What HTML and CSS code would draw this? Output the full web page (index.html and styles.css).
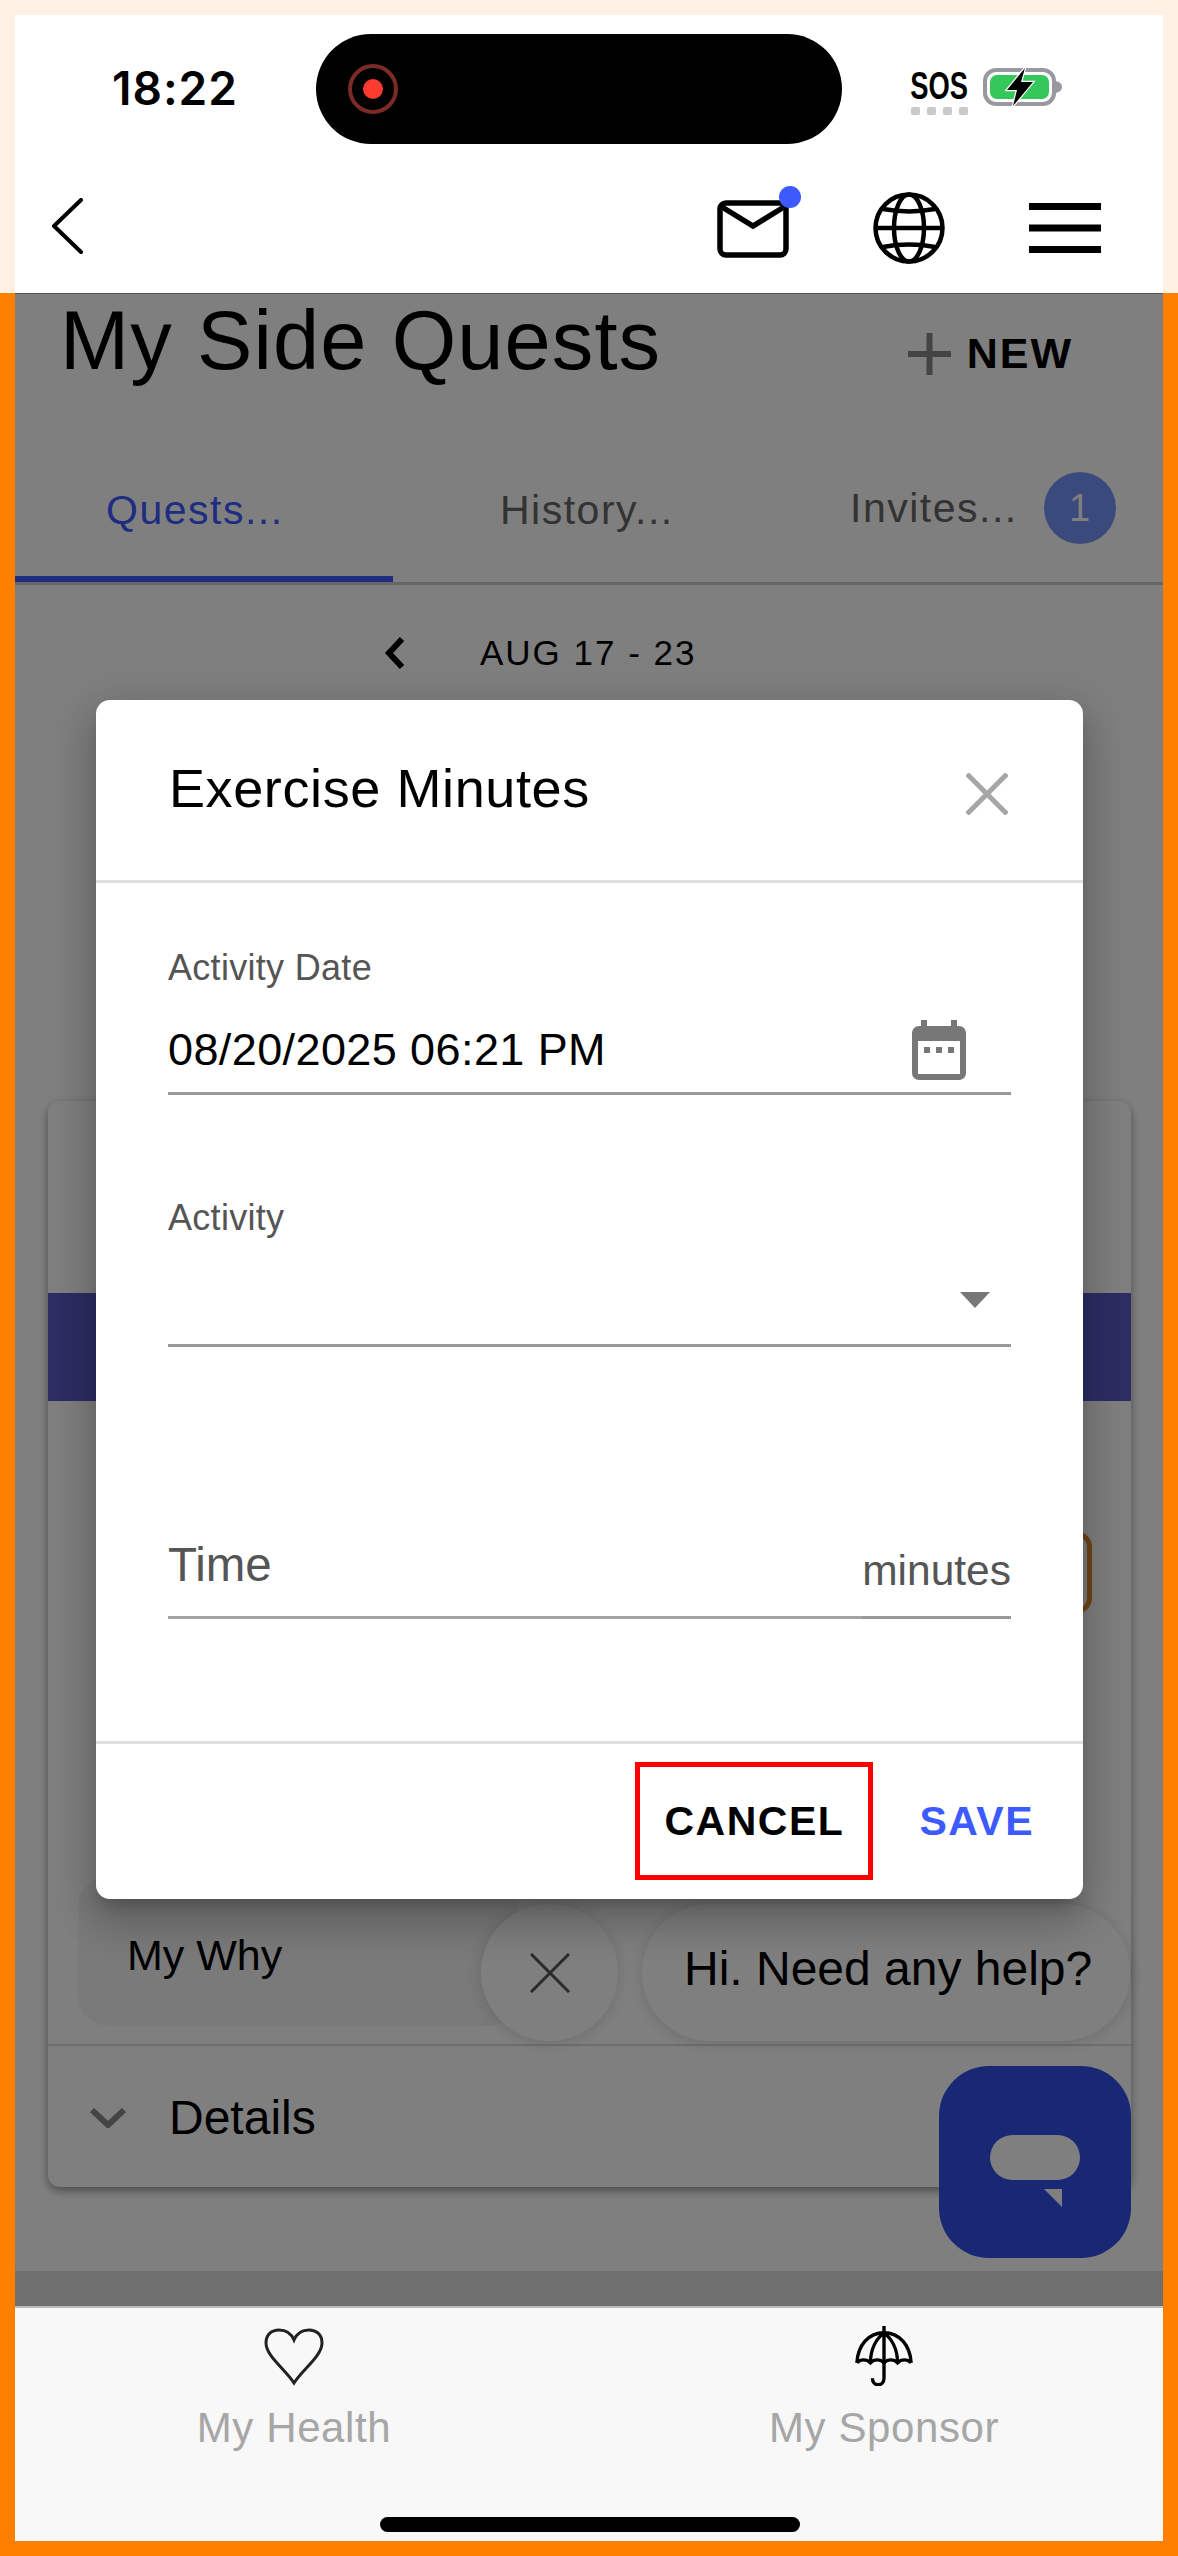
FILE: index.html
```html
<!DOCTYPE html>
<html lang="en">
<head>
    <meta charset="UTF-8"/>
    <meta name="viewport" content="width=device-width, initial-scale=1.0"/>
    <title>My Side Quests</title>
    <link rel="stylesheet" href="styles.css">
</head>

<body>
<div class="phone">
    <div class="top">
        <div class="bar">
            <!-- status bar -->
            <div class="status">
                <span class="clock">18:22</span>
                <div class="island">
                    <span class="rec"><span class="rec-dot"></span></span>
                </div>
                <div class="sos">
                    <span class="sos-text">SOS</span>
                    <span class="sos-dots"><i></i><i></i><i></i><i></i></span>
                </div>
                <svg class="battery" width="80" height="42" viewBox="0 0 80 42">
                    <rect x="2" y="4" width="69" height="34" rx="11" fill="none" stroke="#98989e" stroke-width="4"/>
                    <path d="M73 15c4 1 6 3 6 6s-2 5-6 6z" fill="#98989e"/>
                    <rect x="7" y="9" width="59" height="24" rx="7" fill="#34c759"/>
                    <path d="M42 2L24 24h10l-4 16 20-24H38z" fill="#000" stroke="#fff" stroke-width="2.5" paint-order="stroke"/>
                </svg>
            </div>
            <!-- nav -->
            <div class="nav">
                <svg class="back" width="32" height="56" viewBox="0 0 32 56">
                    <path d="M30 2L3 28l27 26" fill="none" stroke="#000" stroke-width="4" stroke-linecap="round" stroke-linejoin="round"/>
                </svg>
                <div class="nav-icons">
                    <div class="mail">
                        <svg width="72" height="58" viewBox="0 0 72 58">
                            <rect x="3" y="3" width="66" height="52" rx="6" fill="none" stroke="#000" stroke-width="5.5"/>
                            <path d="M5 7l31 19L67 7" fill="none" stroke="#000" stroke-width="5.5"/>
                        </svg>
                        <span class="mail-dot"></span>
                    </div>
                    <svg width="72" height="72" viewBox="0 0 72 72" fill="none" stroke="#000" stroke-width="4.5">
                        <circle cx="36" cy="36" r="33.5"/>
                        <ellipse cx="36" cy="36" rx="15" ry="33.5"/>
                        <path d="M3 36h66"/>
                        <path d="M10 17c16 3 36 3 52 0"/>
                        <path d="M10 55c16-3 36-3 52 0"/>
                    </svg>
                    <svg width="72" height="50" viewBox="0 0 72 50">
                        <rect y="0" width="72" height="7"/>
                        <rect y="21.500" width="72" height="7"/>
                        <rect y="43" width="72" height="7"/>
                    </svg>
                </div>
            </div>
        </div>
    </div>

    <div class="main">
        <div class="title-row">
            <h1 class="title">My Side Quests</h1>
            <div class="new">
                <svg width="43" height="42" viewBox="0 0 43 42">
                    <path d="M21.500 0v42M0 21h43" stroke="#888" stroke-width="6"/>
                </svg>
                <span>NEW</span>
            </div>
        </div>

        <div class="tabs">
            <div class="tab tab-active">Quests...</div>
            <div class="tab tab-history">History...</div>
            <div class="tab tab-invites">Invites...<span class="count">1</span></div>
        </div>

        <div class="week">
            <svg width="22" height="34" viewBox="0 0 22 34">
                <path d="M18 3L5 17l13 14" fill="none" stroke="#000" stroke-width="6"/>
            </svg>
            <span>AUG 17 - 23</span>
        </div>

        <div class="card">
            <div class="card-band"></div>
            <div class="card-mark"></div>
            <div class="card-body">
                <div class="why">My Why</div>
            </div>
            <div class="details">
                <svg width="36" height="20" viewBox="0 0 36 20">
                    <path d="M2 2l16 15L34 2" fill="none" stroke="#888" stroke-width="6"/>
                </svg>
                <span>Details</span>
            </div>
        </div>
        <div class="foot-strip"></div>

        <!-- chat widget -->
        <div class="chat-help">
            <div class="chat-close">
                <svg width="40" height="40" viewBox="0 0 40 40">
                    <path d="M1 1l38 38M39 1L1 39" stroke="#555" stroke-width="3"/>
                </svg>
            </div>
            <div class="chat-bubble">Hi. Need any help?</div>
        </div>
        <div class="chat-fab">
            <svg width="90" height="72" viewBox="0 0 90 72">
                <rect width="90" height="45" rx="22.500" fill="#fff"/>
                <path d="M54 54h18v18z" fill="#fff"/>
            </svg>
        </div>

        <div class="dim"></div>

        <!-- dialog -->
        <div class="modal">
            <div class="modal-head">
                <h2>Exercise Minutes</h2>
                <svg width="42" height="42" viewBox="0 0 42 42">
                    <path d="M1 1l40 40M41 1L1 41" stroke="#a6a6a6" stroke-width="5"/>
                </svg>
            </div>
            <div class="modal-body">
                <div class="label label-date">Activity Date</div>
                <div class="row row-date">
                    <span class="value">08/20/2025 06:21 PM</span>
                    <svg class="cal" width="54" height="60" viewBox="0 0 54 60">
                        <path d="M9 0h6v6h24V0h6v6h2a7 7 0 0 1 7 7v40a7 7 0 0 1-7 7H7a7 7 0 0 1-7-7V13a7 7 0 0 1 7-7h2z" fill="#777"/>
                        <rect x="6" y="21" width="42" height="33" fill="#fff"/>
                        <path d="M12 27h6v6h-6zM24 27h6v6h-6zM36 27h6v6h-6z" fill="#777"/>
                    </svg>
                </div>
                <div class="label label-activity">Activity</div>
                <div class="row row-select">
                    <svg class="caret" width="30" height="16" viewBox="0 0 30 16">
                        <path d="M0 0h30L15 16z" fill="#777"/>
                    </svg>
                </div>
                <div class="row-time">
                    <div class="time-input">Time</div>
                    <div class="time-unit">minutes</div>
                </div>
            </div>
            <div class="modal-foot">
                <button class="btn btn-cancel">CANCEL</button>
                <button class="btn btn-save">SAVE</button>
            </div>
        </div>
    </div>

    <div class="tabbar">
        <div class="tabbar-items">
            <div class="tabbar-item">
                <svg width="60" height="60" viewBox="0 0 60 60">
                    <path d="M30 57C21 43 2 30 2 17 2 8 8 4 15 4c6 0 12 3 15 10 3-7 9-10 15-10 7 0 13 4 13 13 0 13-19 26-28 40z" fill="none" stroke="#222" stroke-width="3"/>
                </svg>
                <span>My Health</span>
            </div>
            <div class="tabbar-item">
                <svg width="60" height="60" viewBox="0 0 60 62" fill="none" stroke="#000" stroke-width="3.5">
                    <path d="M30 0v8"/>
                    <path d="M2 38C3 20 14 7 30 7s27 13 28 31"/>
                    <path d="M2 38c4-4 10-4 14 0 4-4 10-4 14 0 4-4 10-4 14 0 4-4 10-4 14 0"/>
                    <path d="M16 38c0-14 6-25 14-31 8 6 14 17 14 31M30 7v31"/>
                    <path d="M30 38v16c0 9-12 9-12 0"/>
                </svg>
                <span>My Sponsor</span>
            </div>
        </div>
        <div class="home-bar"></div>
    </div>
</div>
</body>
</html>
```

FILE: styles.css
```css
* {
    box-sizing: border-box;
}

body {
    margin: 0;
    font-family: "Liberation Sans", Arial, sans-serif;
    color: #000;
}

.phone {
    width: 1178px;
    height: 2556px;
    background: #ff7f00;
    display: flex;
    flex-direction: column;
    padding-bottom: 15px;
    overflow: hidden;
}

/* top: status + nav */
.top {
    background: #fef0e3;
    padding: 15px 15px 0;
    height: 293px;
    flex: none;
}

.bar {
    background: #fff;
    height: 100%;
}

.status {
    height: 148px;
    display: flex;
    align-items: center;
    position: relative;
}

.clock {
    font-family: Inter, "Liberation Sans", sans-serif;
    font-weight: 600;
    font-size: 46px;
    letter-spacing: 1px;
    width: 301px;
    padding-left: 97px;
    margin-top: -2px;
}

.island {
    width: 526px;
    height: 110px;
    border-radius: 55px;
    background: #000;
    display: flex;
    align-items: center;
    padding-left: 32px;
}

.rec {
    width: 50px;
    height: 50px;
    border-radius: 50%;
    border: 4px solid #7a2b25;
    display: flex;
    align-items: center;
    justify-content: center;
}

.rec-dot {
    width: 20px;
    height: 20px;
    border-radius: 50%;
    background: #ff3b30;
}

.sos {
    margin-left: 68px;
    width: 58px;
    display: flex;
    flex-direction: column;
    align-items: center;
    gap: 4px;
    margin-top: 6px;
}

.sos-text {
    display: inline-block;
    font-weight: 700;
    font-size: 38px;
    line-height: 34px;
    transform: scaleX(.72);
    white-space: nowrap;
}

.sos-dots {
    display: flex;
    gap: 7px;
}

.sos-dots i {
    width: 9px;
    height: 8px;
    border-radius: 2px;
    background: #c9c9c9;
}

.battery {
    margin: -4px 0 0 15px;
}

.nav {
    height: 130px;
    display: flex;
    align-items: center;
    padding: 0 62px 0 36px;
}

.back {
    margin-top: -4px;
}

.nav-icons {
    margin-left: auto;
    display: flex;
    align-items: center;
    gap: 84px;
}

.mail {
    position: relative;
    height: 58px;
    margin-top: 2px;
}

.mail-dot {
    position: absolute;
    left: 62px;
    top: -14px;
    width: 22px;
    height: 22px;
    border-radius: 50%;
    background: #3d5afe;
}

/* page behind the dialog */
.main {
    flex: 1;
    margin: 0 15px;
    background: #fff;
    position: relative;
    overflow: hidden;
    border-top: 1px solid #555;
}

.title-row {
    height: 93px;
    padding: 1px 90px 0 45px;
    display: flex;
    justify-content: space-between;
}

.title {
    margin: 0;
    font-weight: 400;
    font-size: 83px;
    line-height: 92px;
    letter-spacing: 1.100px;
}

.new {
    display: flex;
    align-items: center;
    gap: 16px;
    height: 92px;
    padding-top: 25px;
    font-weight: 700;
    font-size: 43px;
    letter-spacing: 2px;
}

.tabs {
    padding-top: 85px;
    display: grid;
    grid-template-columns: 378px 378px 1fr;
    align-items: end;
    border-bottom: 3px solid #ccc;
    font-size: 41px;
    line-height: 50px;
    letter-spacing: 1.500px;
    color: #666;
}

.tab-active {
    padding: 0 0 41px 91px;
    border-bottom: 6px solid #3d5afe;
    color: #3d5afe;
}

.tab-history {
    padding: 0 0 47px 107px;
}

.tab-invites {
    padding: 0 0 38px 79px;
    display: flex;
    align-items: center;
    gap: 26px;
}

.count {
    width: 72px;
    height: 72px;
    border-radius: 50%;
    background: #7694fa;
    color: #fff;
    font-size: 38px;
    letter-spacing: 0;
    display: flex;
    align-items: center;
    justify-content: center;
}

.week {
    margin-top: 48px;
    padding-left: 369px;
    height: 40px;
    display: flex;
    align-items: center;
    gap: 74px;
    font-size: 35px;
    line-height: 40px;
    letter-spacing: 2px;
}

.card {
    margin: 428px 32px 0 33px;
    height: 1086px;
    background: #fff;
    border-radius: 12px;
    box-shadow: 0 4px 10px rgba(0, 0, 0, .4);
    display: flex;
    flex-direction: column;
    position: relative;
}

.card-band {
    margin-top: 192px;
    height: 108px;
    background: #585cc8;
}

.card-mark {
    position: absolute;
    top: 430px;
    right: 39px;
    width: 40px;
    height: 83px;
    border: 5px solid #e08a30;
    border-radius: 16px;
}

.card-body {
    flex: 1;
    padding: 0 0 18px 30px;
    display: flex;
    align-items: flex-end;
}

.why {
    width: 440px;
    height: 150px;
    padding: 54px 0 0 49px;
    border-radius: 30px;
    background: #f4f4f4;
    font-size: 43px;
    line-height: 50px;
}

.details {
    height: 143px;
    border-top: 2px solid #ddd;
    padding: 3px 0 0 42px;
    display: flex;
    align-items: center;
    gap: 43px;
    font-size: 48px;
    line-height: 56px;
}

.foot-strip {
    margin-top: 84px;
    height: 36px;
    background: #dedede;
}

.chat-help {
    position: absolute;
    left: 466px;
    top: 1610px;
    display: flex;
    gap: 24px;
}

.chat-close {
    width: 137px;
    height: 137px;
    border-radius: 50%;
    background: #fff;
    box-shadow: 0 2px 16px rgba(0, 0, 0, .14);
    display: flex;
    align-items: center;
    justify-content: center;
}

.chat-bubble {
    width: 488px;
    height: 137px;
    border-radius: 68px;
    background: #fff;
    box-shadow: 0 2px 16px rgba(0, 0, 0, .14);
    font-size: 48px;
    line-height: 129px;
    padding-left: 42px;
}

.chat-fab {
    position: absolute;
    right: 32px;
    bottom: 48px;
    width: 192px;
    height: 192px;
    border-radius: 50px;
    background: #3350e8;
    padding: 69px 0 0 51px;
}

.dim {
    position: absolute;
    inset: 0;
    background: rgba(0, 0, 0, .5);
}

/* dialog */
.modal {
    position: absolute;
    left: 81px;
    top: 406px;
    width: 987px;
    height: 1199px;
    background: #fff;
    border-radius: 14px;
    display: flex;
    flex-direction: column;
    box-shadow: 0 11px 15px -7px rgba(0, 0, 0, .2), 0 24px 38px 3px rgba(0, 0, 0, .14), 0 9px 46px 8px rgba(0, 0, 0, .12);
}

.modal-head {
    height: 183px;
    flex: none;
    border-bottom: 3px solid #e0e0e0;
    padding: 0 75px 0 73px;
    display: flex;
    justify-content: space-between;
    align-items: center;
}

.modal-head h2 {
    margin: 0 0 4px;
    font-weight: 400;
    font-size: 54px;
    letter-spacing: .6px;
}

.modal-head svg {
    margin-top: 8px;
}

.modal-body {
    flex: 1;
    padding: 0 72px;
}

.label {
    font-size: 36px;
    line-height: 44px;
    letter-spacing: .3px;
    color: #555;
}

.label-date {
    margin-top: 63px;
}

.label-activity {
    margin-top: 101px;
}

.row {
    display: flex;
    border-bottom: 3px solid #999;
}

.row-date {
    margin-top: 30px;
    padding-bottom: 12px;
    align-items: center;
    justify-content: space-between;
}

.value {
    font-size: 45px;
    line-height: 50px;
    letter-spacing: .4px;
}

.cal {
    margin-right: 45px;
}

.row-select {
    padding: 52px 21px 36px 0;
    justify-content: flex-end;
}

.row-time {
    margin-top: 192px;
    display: flex;
    color: #555;
}

.time-input {
    flex: 1;
    font-size: 47.500px;
    line-height: 52px;
    padding-bottom: 25px;
    border-bottom: 3px solid #a3a3a3;
}

.time-unit {
    font-size: 42.500px;
    line-height: 48px;
    padding-top: 8px;
    border-bottom: 3px solid #999;
}

.modal-foot {
    height: 158px;
    flex: none;
    border-top: 3px solid #e0e0e0;
    padding: 18px 49px 0 0;
    display: flex;
    justify-content: flex-end;
    align-items: flex-start;
}

.btn {
    height: 118px;
    padding: 0;
    border: 0;
    background: none;
    font-family: "Liberation Sans", Arial, sans-serif;
    font-weight: 700;
    font-size: 41px;
    letter-spacing: 1.500px;
}

.btn-cancel {
    width: 238px;
    border: 5px solid #f00;
    color: #000;
}

.btn-save {
    margin-left: 46px;
    color: #3d5afe;
}

/* bottom tabs */
.tabbar {
    height: 235px;
    flex: none;
    margin: 0 15px;
    background: #f8f8f8;
    border-top: 2px solid #bbb;
    padding-top: 18px;
    position: relative;
}

.tabbar-items {
    display: flex;
    justify-content: center;
}

.tabbar-item {
    flex: none;
    width: 590px;
    display: flex;
    flex-direction: column;
    align-items: center;
    gap: 17px;
    font-size: 42px;
    line-height: 50px;
    letter-spacing: .6px;
    color: #a6a6a6;
}

.home-bar {
    position: absolute;
    left: 365px;
    bottom: 9px;
    width: 420px;
    height: 15px;
    border-radius: 8px;
    background: #000;
}
```
